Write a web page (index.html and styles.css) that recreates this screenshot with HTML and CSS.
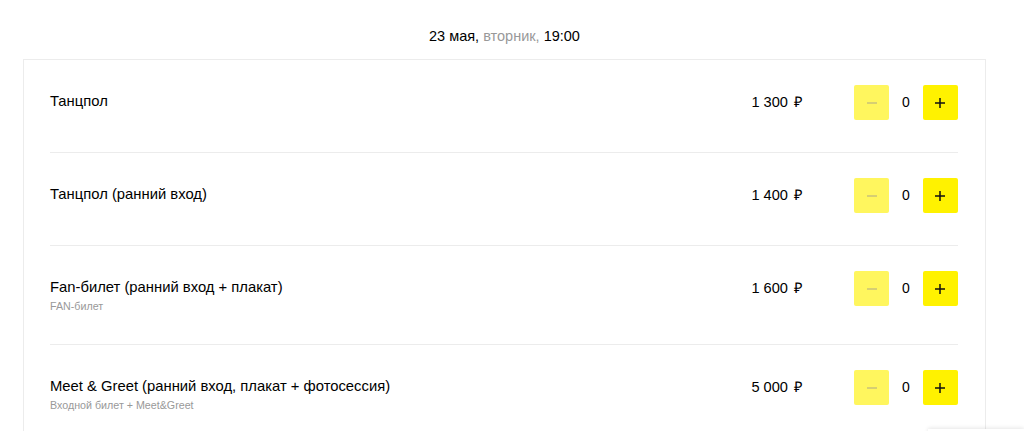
FILE: index.html
```html
<!DOCTYPE html>
<html lang="ru">
<head>
    <meta charset="UTF-8">
    <title>Билеты</title>
    <link rel="stylesheet" href="styles.css">
</head>
<body>
    <div class="page">
        <div class="event-date">23 мая, <span class="weekday">вторник,</span> 19:00</div>

        <div class="tickets">
            <div class="ticket">
                <div class="ticket-info">
                    <div class="ticket-name">Танцпол</div>
                </div>
                <div class="ticket-price">1 300 <span class="rub">₽</span></div>
                <div class="counter">
                    <button class="counter-btn minus" disabled>
                        <svg width="12" height="12" viewBox="0 0 12 12"><path d="M1 6h10" /></svg>
                    </button>
                    <span class="counter-value">0</span>
                    <button class="counter-btn plus">
                        <svg width="12" height="12" viewBox="0 0 12 12"><path d="M1 6h10M6 1v10" /></svg>
                    </button>
                </div>
            </div>

            <div class="ticket">
                <div class="ticket-info">
                    <div class="ticket-name">Танцпол (ранний вход)</div>
                </div>
                <div class="ticket-price">1 400 <span class="rub">₽</span></div>
                <div class="counter">
                    <button class="counter-btn minus" disabled>
                        <svg width="12" height="12" viewBox="0 0 12 12"><path d="M1 6h10" /></svg>
                    </button>
                    <span class="counter-value">0</span>
                    <button class="counter-btn plus">
                        <svg width="12" height="12" viewBox="0 0 12 12"><path d="M1 6h10M6 1v10" /></svg>
                    </button>
                </div>
            </div>

            <div class="ticket">
                <div class="ticket-info">
                    <div class="ticket-name">Fan-билет (ранний вход + плакат)</div>
                    <div class="ticket-note">FAN-билет</div>
                </div>
                <div class="ticket-price">1 600 <span class="rub">₽</span></div>
                <div class="counter">
                    <button class="counter-btn minus" disabled>
                        <svg width="12" height="12" viewBox="0 0 12 12"><path d="M1 6h10" /></svg>
                    </button>
                    <span class="counter-value">0</span>
                    <button class="counter-btn plus">
                        <svg width="12" height="12" viewBox="0 0 12 12"><path d="M1 6h10M6 1v10" /></svg>
                    </button>
                </div>
            </div>

            <div class="ticket">
                <div class="ticket-info">
                    <div class="ticket-name">Meet &amp; Greet (ранний вход, плакат + фотосессия)</div>
                    <div class="ticket-note">Входной билет + Meet&amp;Greet</div>
                </div>
                <div class="ticket-price">5 000 <span class="rub">₽</span></div>
                <div class="counter">
                    <button class="counter-btn minus" disabled>
                        <svg width="12" height="12" viewBox="0 0 12 12"><path d="M1 6h10" /></svg>
                    </button>
                    <span class="counter-value">0</span>
                    <button class="counter-btn plus">
                        <svg width="12" height="12" viewBox="0 0 12 12"><path d="M1 6h10M6 1v10" /></svg>
                    </button>
                </div>
            </div>
        </div>
    </div>

    <div class="cart-popup"></div>
</body>
</html>
```

FILE: styles.css
```css
body, html {
    margin: 0;
    padding: 0;
    background: #fff;
    font-family: "Liberation Sans", Arial, sans-serif;
    color: #000;
}

.page {
    width: 963px;
    margin-left: 23px;
}

.event-date {
    padding-top: 27px;
    height: 32px;
    line-height: 18px;
    font-size: 14.5px;
    text-align: center;
}

.weekday {
    color: #999;
}

.tickets {
    border: 1px solid #ececec;
    border-bottom: none;
    padding: 0 27px 0 26px;
}

.ticket {
    display: flex;
    align-items: flex-start;
    padding: 25px 0 32px;
    border-bottom: 1px solid #ececec;
}

.ticket-info {
    flex: 1;
    padding-top: 6px;
}

.ticket-name {
    font-size: 14.8px;
    line-height: 20px;
}

.ticket-note {
    font-size: 10.7px;
    line-height: 12px;
    color: #999;
    margin-top: 3px;
}

.ticket-price {
    font-size: 14.6px;
    line-height: 35px;
    margin-right: 51px;
}

.rub {
    margin-left: 2px;
}

.counter {
    display: flex;
    align-items: center;
    width: 104px;
    justify-content: space-between;
}

.counter-btn {
    width: 35px;
    height: 35px;
    border: none;
    border-radius: 2px;
    padding: 0;
    display: flex;
    align-items: center;
    justify-content: center;
}

.counter-btn svg path {
    fill: none;
    stroke-width: 1.5;
}

.counter-btn.minus {
    background: #fff65e;
}

.counter-btn.minus svg path {
    stroke: #c9c27a;
}

.counter-btn.plus {
    background: #fff200;
}

.counter-btn.plus svg path {
    stroke: #111;
}

.counter-value {
    font-size: 14px;
    line-height: 35px;
}

.cart-popup {
    position: fixed;
    left: 928px;
    top: 429px;
    width: 96px;
    height: 40px;
    background: #fff;
    box-shadow: 0 -1px 4px rgba(0, 0, 0, 0.1);
}
```
